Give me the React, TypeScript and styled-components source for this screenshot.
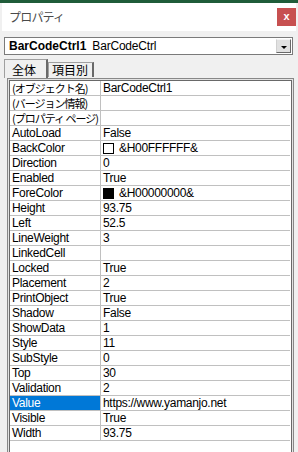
import styled, { createGlobalStyle } from "styled-components";

type PropRow = {
  name: string;
  value: string;
  jp?: boolean;
  swatch?: string;
  selected?: boolean;
};

const rows: PropRow[] = [
  { name: "(オブジェクト名)", value: "BarCodeCtrl1", jp: true },
  { name: "(バージョン情報)", value: "", jp: true },
  { name: "(プロパティ ページ)", value: "", jp: true },
  { name: "AutoLoad", value: "False" },
  { name: "BackColor", value: "&H00FFFFFF&", swatch: "#ffffff" },
  { name: "Direction", value: "0" },
  { name: "Enabled", value: "True" },
  { name: "ForeColor", value: "&H00000000&", swatch: "#000000" },
  { name: "Height", value: "93.75" },
  { name: "Left", value: "52.5" },
  { name: "LineWeight", value: "3" },
  { name: "LinkedCell", value: "" },
  { name: "Locked", value: "True" },
  { name: "Placement", value: "2" },
  { name: "PrintObject", value: "True" },
  { name: "Shadow", value: "False" },
  { name: "ShowData", value: "1" },
  { name: "Style", value: "11" },
  { name: "SubStyle", value: "0" },
  { name: "Top", value: "30" },
  { name: "Validation", value: "2" },
  { name: "Value", value: "https://www.yamanjo.net", selected: true },
  { name: "Visible", value: "True" },
  { name: "Width", value: "93.75" },
];

const GlobalStyle = createGlobalStyle`
  html, body {
    margin: 0;
    padding: 0;
    background: #f0f0f0;
  }
  body {
    font-family: "Liberation Sans", "Noto Sans CJK JP", sans-serif;
    font-size: 12px;
    color: #000;
  }
`;

const Shell = styled.div`
  width: 298px;
  height: 452px;
  box-sizing: border-box;
  border-top: 3px solid #1f5c39;
  background: #f0f0f0;
  display: flex;
  flex-direction: column;
  overflow: hidden;
`;

const TitleBar = styled.div`
  height: 28px;
  margin: 0 2px;
  background: #ffffff;
  display: flex;
  align-items: flex-start;
  justify-content: space-between;
`;

const Title = styled.div`
  font-family: "Noto Sans CJK JP", sans-serif;
  font-size: 12px;
  letter-spacing: -0.8px;
  color: #4a4a4a;
  padding: 6px 0 0 7px;
  line-height: 16px;
`;

const CloseButton = styled.div`
  width: 19px;
  height: 18px;
  margin-top: 5px;
  background: #c75050;
  color: #fff;
  font-family: "Liberation Sans", sans-serif;
  font-weight: bold;
  font-size: 11px;
  line-height: 17px;
  text-align: center;
`;

const Body = styled.div`
  flex: 1;
  display: flex;
  flex-direction: column;
  padding-top: 6px;
  min-height: 0;
`;

const Combo = styled.div`
  height: 16px;
  margin: 0 5px 0 4px;
  border: 1px solid #7a7a7a;
  background: #fff;
  display: flex;
  align-items: center;
  justify-content: space-between;
`;

const ComboText = styled.div`
  padding-left: 4px;
  line-height: 14px;
  letter-spacing: -0.2px;
  white-space: nowrap;
  b {
    letter-spacing: 0;
    margin-right: 6px;
  }
`;

const DropButton = styled.div`
  width: 15px;
  height: 14px;
  margin-right: 1px;
  box-sizing: border-box;
  background: #e1e1e1;
  border-left: 1px solid #d0d0d0;
  border-top: 1px solid #f4f4f4;
  border-right: 1px solid #696969;
  border-bottom: 1px solid #696969;
  display: flex;
  align-items: center;
  justify-content: center;
`;

const Arrow = styled.div`
  width: 0;
  height: 0;
  margin-top: 2px;
  border-left: 3px solid transparent;
  border-right: 3px solid transparent;
  border-top: 3px solid #000;
`;

const Tabs = styled.div`
  display: flex;
  align-items: flex-end;
  margin: 4px 0 0 4px;
  height: 19px;
`;

const Tab = styled.div<{ $active?: boolean }>`
  height: ${(p) => (p.$active ? "19px" : "15px")};
  padding: ${(p) => (p.$active ? "2px 10px 0 7px" : "0 4px 0 3px")};
  margin-bottom: ${(p) => (p.$active ? "0" : "1px")};
  box-sizing: border-box;
  background: #f0f0f0;
  border-left: 1px solid #a0a0a0;
  border-top: 1px solid #a0a0a0;
  border-right: 2px solid #696969;
  font-family: "Noto Sans CJK JP", sans-serif;
  font-size: 12px;
  line-height: ${(p) => (p.$active ? "15px" : "14px")};
`;

const Grid = styled.div`
  flex: 1;
  min-height: 0;
  margin: 0 4px 0 7px;
  border: 1px solid #888;
  border-bottom: none;
  padding: 1px 1px 0 1px;
  background: #e3e3e3;
  display: flex;
`;

const GridInner = styled.div`
  flex: 1;
  border: 1px solid #696969;
  border-bottom: none;
  background: #fff;
  padding-right: 1px;
`;

const Row = styled.div`
  display: grid;
  grid-template-columns: 91px 1fr;
  height: 15px;
`;

const NameCell = styled.div<{ $selected?: boolean }>`
  box-sizing: border-box;
  border-right: 1px solid #c0c0c0;
  border-bottom: 1px solid #c0c0c0;
  padding-left: 2px;
  line-height: 14px;
  letter-spacing: -0.3px;
  white-space: nowrap;
  overflow: hidden;
  background: ${(p) => (p.$selected ? "#0078d7" : "#fff")};
  color: ${(p) => (p.$selected ? "#fff" : "#000")};
`;

const Jp = styled.span`
  font-family: "Noto Sans CJK JP", sans-serif;
  font-size: 11px;
  letter-spacing: -1px;
`;

const ValueCell = styled.div`
  box-sizing: border-box;
  border-bottom: 1px solid #c0c0c0;
  padding-left: 2px;
  line-height: 14px;
  letter-spacing: -0.3px;
  white-space: nowrap;
  overflow: hidden;
  display: flex;
  align-items: center;
`;

const Swatch = styled.span<{ $color: string }>`
  display: inline-block;
  width: 9px;
  height: 9px;
  border: 1px solid #000;
  background: ${(p) => p.$color};
  margin-right: 5px;
  flex-shrink: 0;
`;

const App = () => {
  return (
    <>
      <GlobalStyle />
      <Shell>
        <TitleBar>
          <Title>プロパティ</Title>
          <CloseButton>x</CloseButton>
        </TitleBar>
        <Body>
          <Combo>
            <ComboText>
              <b>BarCodeCtrl1</b>BarCodeCtrl
            </ComboText>
            <DropButton>
              <Arrow />
            </DropButton>
          </Combo>
          <Tabs>
            <Tab $active>全体</Tab>
            <Tab>項目別</Tab>
          </Tabs>
          <Grid>
            <GridInner>
              {rows.map((r) => (
                <Row key={r.name}>
                  <NameCell $selected={r.selected}>
                    {r.jp ? <Jp>{r.name}</Jp> : r.name}
                  </NameCell>
                  <ValueCell>
                    {r.swatch && <Swatch $color={r.swatch} />}
                    {r.value}
                  </ValueCell>
                </Row>
              ))}
            </GridInner>
          </Grid>
        </Body>
      </Shell>
    </>
  );
};

export default App;
